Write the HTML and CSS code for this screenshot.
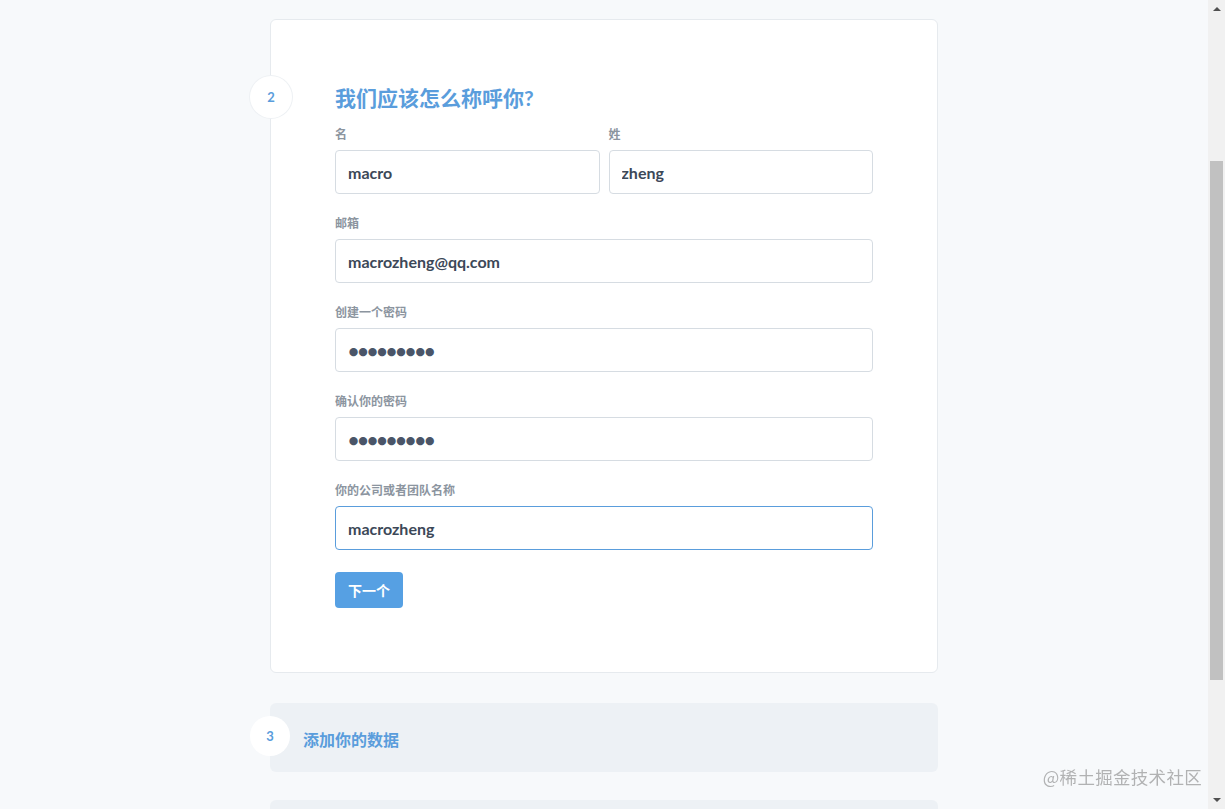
FILE: index.html
```html
<!DOCTYPE html>
<html lang="zh-CN">
<head>
    <meta charset="UTF-8">
    <meta name="viewport" content="width=device-width, initial-scale=1.0">
    <title>注册</title>
    <link rel="stylesheet" href="styles.css">
</head>
<body>

    <div class="steps">
        <!-- Step 2: who are you -->
        <div class="step-card">
            <div class="step-num">2</div>
            <h2 class="step-title">我们应该怎么称呼你?</h2>

            <div class="row">
                <div class="field">
                    <label>名</label>
                    <input type="text" value="macro">
                </div>
                <div class="field">
                    <label>姓</label>
                    <input type="text" value="zheng">
                </div>
            </div>

            <div class="field">
                <label>邮箱</label>
                <input type="text" value="macrozheng@qq.com">
            </div>

            <div class="field">
                <label>创建一个密码</label>
                <input type="password" value="123456789">
            </div>

            <div class="field">
                <label>确认你的密码</label>
                <input type="password" value="123456789">
            </div>

            <div class="field">
                <label>你的公司或者团队名称</label>
                <input type="text" class="focused" value="macrozheng" autofocus>
            </div>

            <button class="btn-next">下一个</button>
        </div>

        <!-- Step 3: collapsed -->
        <div class="step-collapsed">
            <div class="step-num small">3</div>
            <span class="collapsed-title">添加你的数据</span>
        </div>

        <div class="step-collapsed"></div>
    </div>

    <div class="fake-scroll">
        <span class="arrow up"></span>
        <div class="thumb"></div>
        <span class="arrow down"></span>
    </div>

    <div class="watermark">@稀土掘金技术社区</div>

</body>
</html>
```

FILE: styles.css
```css
html, body {
    height: 100%;
    overflow: hidden;
}

body {
    margin: 0;
    padding-right: 17px;
    background-color: #f7f9fb;
    font-family: Lato, "Noto Sans CJK SC", sans-serif;
    color: #3c4858;
}

.steps {
    width: 668px;
    margin: 19px auto 0;
}

.step-card {
    position: relative;
    background: #fff;
    border: 1px solid #e6eaee;
    border-radius: 6px;
    padding: 63px 64px 64px;
}

.step-num {
    position: absolute;
    left: -21px;
    top: 56px;
    width: 42px;
    height: 42px;
    border-radius: 50%;
    background: #fff;
    box-shadow: 0 0 0 1px #eef1f4;
    color: #5a9ddc;
    font-size: 13px;
    font-weight: 700;
    display: flex;
    align-items: center;
    justify-content: center;
}

.step-num.small {
    width: 40px;
    height: 40px;
    left: -20px;
    top: 13px;
    box-shadow: none;
}

.step-title {
    margin: 0 0 14px;
    font-size: 21px;
    font-weight: 700;
    color: #5a9ddc;
    line-height: 30px;
}

.row {
    display: flex;
    gap: 9px;
}

.row .field {
    flex: 1;
}

.field {
    display: flex;
    flex-direction: column;
    margin-bottom: 22px;
}

.field label {
    font-size: 12px;
    font-weight: 700;
    color: #8c959f;
    line-height: 16px;
    margin-bottom: 7px;
}

.field input {
    height: 44px;
    box-sizing: border-box;
    border: 1px solid #d6dce2;
    border-radius: 4px;
    padding: 0 12px;
    font-family: Lato, "Noto Sans CJK SC", sans-serif;
    font-size: 16px;
    font-weight: 700;
    color: #3c4858;
    outline: none;
    background: #fff;
    caret-color: #3c4858;
}

.field input[type="password"] {
    font-size: 19px;
    letter-spacing: -1.5px;
    color: #4a5568;
}

.field input.focused {
    border-color: #5a9ddc;
}

.btn-next {
    height: 36px;
    padding: 0 13px;
    border: none;
    border-radius: 4px;
    background-color: #56a0e3;
    color: #fff;
    font-family: Lato, "Noto Sans CJK SC", sans-serif;
    font-size: 14px;
    font-weight: 700;
    cursor: pointer;
}

.step-collapsed {
    position: relative;
    margin-top: 30px;
    height: 69px;
    background: #edf1f5;
    border-radius: 6px;
    display: flex;
    align-items: center;
    padding-left: 33px;
}

.step-collapsed + .step-collapsed {
    margin-top: 28px;
}

.collapsed-title {
    font-size: 16px;
    font-weight: 700;
    color: #5a9ddc;
    padding-top: 2px;
}

.fake-scroll {
    position: fixed;
    top: 0;
    right: 0;
    width: 17px;
    height: 100%;
    background: #f1f1f1;
}

.fake-scroll .thumb {
    position: absolute;
    left: 2px;
    right: 2px;
    top: 161px;
    height: 519px;
    background: #c1c1c1;
}

.fake-scroll .arrow {
    position: absolute;
    left: 5px;
    width: 0;
    height: 0;
    border-left: 4px solid transparent;
    border-right: 4px solid transparent;
}

.fake-scroll .arrow.up {
    top: 7px;
    border-bottom: 4px solid #505050;
}

.fake-scroll .arrow.down {
    bottom: 7px;
    border-top: 4px solid #505050;
}

.watermark {
    position: fixed;
    right: 23px;
    bottom: 20px;
    font-family: "Noto Sans CJK SC", sans-serif;
    font-size: 17.5px;
    color: rgba(120, 120, 120, 0.55);
    letter-spacing: 0.3px;
}
```
